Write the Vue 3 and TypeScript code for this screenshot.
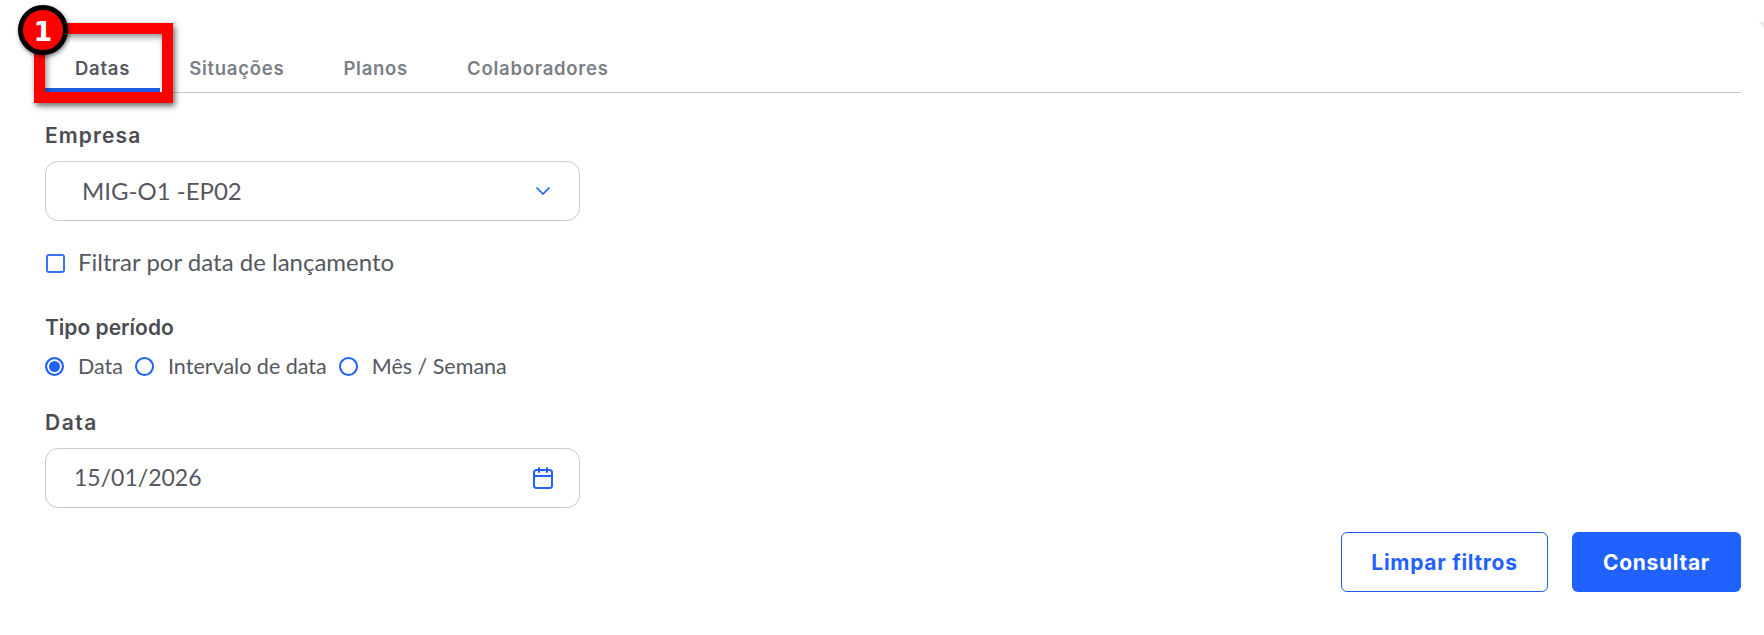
<script setup lang="ts">
const tabs: string[] = ['Datas', 'Situações', 'Planos', 'Colaboradores']
const radios: string[] = ['Data', 'Intervalo de data', 'Mês / Semana']
</script>

<template>
  <div class="page">
    <nav class="tabs">
      <div v-for="(t, i) in tabs" :key="t" class="tab" :class="{ active: i === 0 }">{{ t }}</div>
    </nav>

    <label class="label first">Empresa</label>
    <div class="field select">
      <span class="value">MIG-O1 -EP02</span>
      <svg width="18" height="18" viewBox="0 0 18 18" fill="none" stroke="#1f62ff" stroke-width="1.7" stroke-linecap="round" stroke-linejoin="round">
        <path d="M3 6l6 6 6-6" />
      </svg>
    </div>

    <div class="check">
      <span class="box"></span>
      <span class="check-text">Filtrar por data de lançamento</span>
    </div>

    <label class="label tipo">Tipo período</label>
    <div class="radios">
      <div v-for="(r, i) in radios" :key="r" class="radio">
        <span class="dot" :class="{ on: i === 0 }"></span>
        <span>{{ r }}</span>
      </div>
    </div>

    <label class="label data">Data</label>
    <div class="field date">
      <span class="value">15/01/2026</span>
      <svg width="22" height="24" viewBox="0 0 22 24" fill="none" stroke="#1f62ff" stroke-width="2" stroke-linecap="round" stroke-linejoin="round">
        <rect x="2" y="4" width="18" height="18" rx="2.5" />
        <path d="M2 10h18M7 2v4M15 2v4" />
      </svg>
    </div>

    <div class="actions">
      <button class="btn ghost">Limpar filtros</button>
      <button class="btn primary">Consultar</button>
    </div>

    <div class="callout"></div>
    <div class="badge">1</div>
    <div class="corner"></div>
  </div>
</template>

<style>
html, body { margin: 0; background: #fff; }
</style>

<style scoped>
.page {
  position: relative;
  width: 1764px;
  height: 635px;
  box-sizing: border-box;
  padding: 46px 23px 0 45px;
  overflow: hidden;
  background: #fff;
  font-family: "Lato", "Noto Sans", sans-serif;
  color: #55585f;
}
.tabs {
  display: flex;
  height: 46px;
  border-bottom: 1px solid #c9cacc;
  font-family: "Inter", sans-serif;
  font-weight: 600;
  font-size: 18.5px;
  letter-spacing: 0.75px;
  color: #7c7f85;
}
.tab {
  padding: 11px 30px 0;
  height: 46px;
  box-sizing: border-box;
}
.tab + .tab { margin-left: -1px; }
.tab.active { color: #55585f; border-bottom: 4px solid #1f5fe8; }
.label {
  display: block;
  font-family: "Inter", sans-serif;
  font-weight: 600;
  font-size: 21px;
  line-height: 26px;
  color: #4b4c51;
}
.label.first { margin-top: 30px; letter-spacing: 1.1px; }
.label.tipo { margin-top: 38px; }
.label.data { margin-top: 31px; letter-spacing: 1.5px; }
.field {
  display: flex;
  align-items: center;
  justify-content: space-between;
  box-sizing: border-box;
  width: 535px;
  height: 60px;
  margin-top: 12px;
  border: 1px solid #c9cacc;
  border-radius: 13px;
  font-size: 24px;
}
.value { padding-bottom: 2px; }
.select { padding: 0 27px 0 36px; }
.date { padding: 0 25px 0 28px; font-size: 23px; }
.check {
  display: flex;
  align-items: center;
  gap: 13px;
  margin-top: 28px;
  height: 28px;
  font-size: 24px;
}
.check-text { padding-bottom: 4px; }
.box {
  width: 15px;
  height: 15px;
  border: 2px solid #3a72f5;
  border-radius: 3px;
  margin-left: 1px;
}
.radios {
  display: flex;
  gap: 12px;
  margin-top: 12px;
  height: 26px;
  font-size: 21.5px;
}
.radio { display: flex; align-items: center; gap: 14px; }
.dot {
  box-sizing: border-box;
  width: 19px;
  height: 19px;
  border: 2px solid #1f62ff;
  border-radius: 50%;
}
.dot.on { background: #1f62ff; box-shadow: inset 0 0 0 2px #fff; }
.actions {
  display: flex;
  justify-content: flex-end;
  gap: 24px;
  margin-top: 24px;
}
.btn {
  box-sizing: border-box;
  height: 60px;
  border-radius: 6px;
  font-family: "Inter", sans-serif;
  font-weight: 700;
  font-size: 21px;
  letter-spacing: 0.7px;
}
.ghost { width: 207px; background: #fff; color: #1f62ff; border: 1px solid #1f5fe8; }
.primary { width: 169px; background: #1f62ff; color: #fff; border: none; }
.callout {
  position: absolute;
  left: 34px;
  top: 23px;
  width: 139px;
  height: 80px;
  box-sizing: border-box;
  border: 11px solid #fe0000;
  box-shadow: 2px 3px 6px rgba(0, 0, 0, 0.6), inset 2px 3px 6px rgba(0, 0, 0, 0.45);
}
.badge {
  position: absolute;
  left: 18px;
  top: 5px;
  width: 50px;
  height: 50px;
  box-sizing: border-box;
  border: 5px solid #000;
  border-radius: 50%;
  background: #fe0000;
  color: #fff;
  font-family: "DejaVu Sans", sans-serif;
  font-weight: 700;
  font-size: 27px;
  line-height: 43px;
  text-align: center;
  box-shadow: 1px 2px 4px rgba(0, 0, 0, 0.5);
}
.corner {
  position: absolute;
  right: 0;
  top: 22px;
  width: 0;
  height: 0;
  border-top: 7px solid #e8eaef;
  border-left: 5px solid transparent;
}
</style>
